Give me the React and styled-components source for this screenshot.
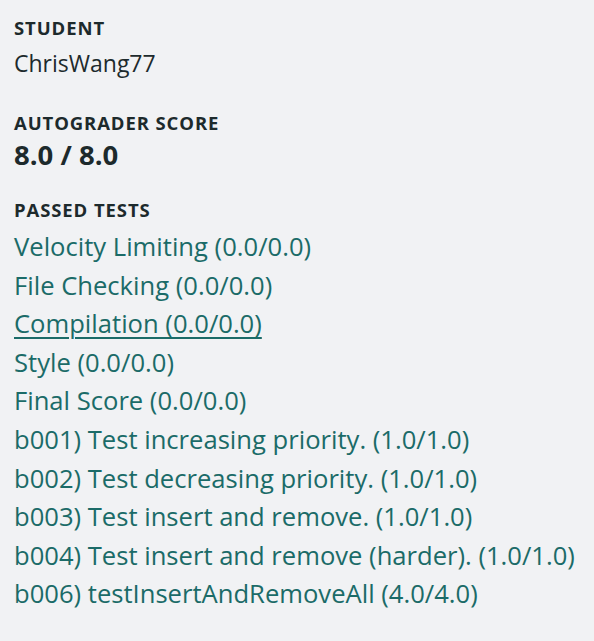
import React from "react";
import styled, { createGlobalStyle } from "styled-components";

const GlobalStyle = createGlobalStyle`
  html, body {
    margin: 0;
    padding: 0;
    background: #f1f2f4;
  }
  body {
    font-family: "Open Sans", Lato, sans-serif;
  }
`;

const Panel = styled.div`
  padding: 16px 14px;
  min-height: 641px;
  box-sizing: border-box;
  background: #f1f2f4;
`;

const Section = styled.section`
  margin-bottom: ${({ gap }) => gap || 24}px;
`;

const Label = styled.div`
  font-size: 18.5px;
  font-weight: 700;
  letter-spacing: 0.9px;
  color: #1d2a2c;
  text-transform: uppercase;
  line-height: 24px;
`;

const Value = styled.div`
  margin-top: ${({ offset }) => offset || 0}px;
  font-size: ${({ bold }) => (bold ? 27.5 : 23)}px;
  font-weight: ${({ bold }) => (bold ? 700 : 400)};
  color: #1d2a2c;
  line-height: 34px;
`;

const TestList = styled.ul`
  list-style: none;
  margin: 6px 0 0;
  padding: 0;
`;

const TestLink = styled.a`
  display: inline-block;
  font-size: 25.6px;
  line-height: 38.6px;
  color: #1b6b68;
  text-decoration: ${({ hovered }) => (hovered ? "underline" : "none")};
  text-decoration-thickness: 2px;
  text-underline-offset: 4px;
  cursor: pointer;
`;

const tests = [
  "Velocity Limiting (0.0/0.0)",
  "File Checking (0.0/0.0)",
  "Compilation (0.0/0.0)",
  "Style (0.0/0.0)",
  "Final Score (0.0/0.0)",
  "b001) Test increasing priority. (1.0/1.0)",
  "b002) Test decreasing priority. (1.0/1.0)",
  "b003) Test insert and remove. (1.0/1.0)",
  "b004) Test insert and remove (harder). (1.0/1.0)",
  "b006) testInsertAndRemoveAll (4.0/4.0)",
];

export default function App() {
  return (
    <>
      <GlobalStyle />
      <Panel>
        <Section gap={31}>
          <Label>Student</Label>
          <Value offset={6}>ChrisWang77</Value>
        </Section>
        <Section gap={26}>
          <Label>Autograder Score</Label>
          <Value bold offset={3}>8.0 / 8.0</Value>
        </Section>
        <Section>
          <Label>Passed Tests</Label>
          <TestList>
            {tests.map((t, i) => (
              <li key={t}>
                <TestLink hovered={i === 2}>{t}</TestLink>
              </li>
            ))}
          </TestList>
        </Section>
      </Panel>
    </>
  );
}
